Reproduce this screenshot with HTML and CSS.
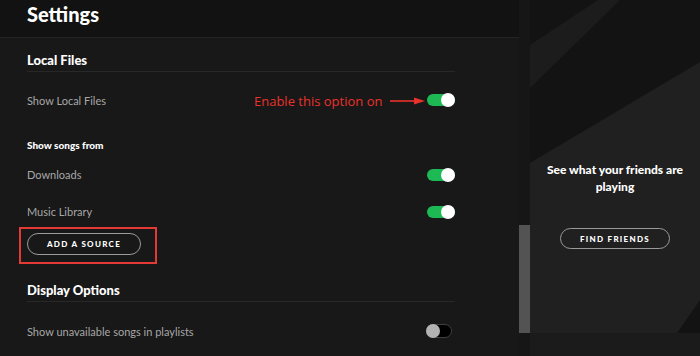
FILE: index.html
```html
<!DOCTYPE html>
<html lang="en">
<head>
  <meta charset="UTF-8" />
  <meta name="viewport" content="width=device-width, initial-scale=1.0"/>
  <title>Settings</title>
  <link rel="stylesheet" href="styles.css">
</head>
<body>

  <main class="settings">
    <header class="settings-header">
      <h1>Settings</h1>
    </header>

    <div class="settings-body">
      <section class="group">
        <h2 class="group-title">Local Files</h2>

        <div class="row row-tall">
          <span class="row-label">Show Local Files</span>
          <span class="toggle on"><span class="knob"></span></span>

          <div class="note">
            <span class="note-text">Enable this option on</span>
            <svg class="note-arrow" width="36" height="8" viewBox="0 0 36 8">
              <path d="M0 4 L26 4" stroke="#e8322b" stroke-width="1.6"/>
              <path d="M24 0.5 L35 4 L24 7.5 Z" fill="#e8322b"/>
            </svg>
          </div>
        </div>

        <h3 class="subtitle">Show songs from</h3>

        <div class="row">
          <span class="row-label">Downloads</span>
          <span class="toggle on"><span class="knob"></span></span>
        </div>

        <div class="row">
          <span class="row-label">Music Library</span>
          <span class="toggle on"><span class="knob"></span></span>
        </div>

        <div class="highlight">
          <button class="btn-outline btn-source">ADD A SOURCE</button>
        </div>
      </section>

      <section class="group">
        <h2 class="group-title group-title-second">Display Options</h2>

        <div class="row row-last">
          <span class="row-label">Show unavailable songs in playlists</span>
          <span class="toggle off"><span class="knob"></span></span>
        </div>
      </section>
    </div>
  </main>

  <div class="scroll-track">
    <div class="scroll-thumb"></div>
  </div>

  <aside class="friends">
    <svg class="friends-bg" width="170" height="356" viewBox="0 0 170 356">
      <rect width="170" height="356" fill="#131313"/>
      <polygon points="0,45 68,0 90,0 0,88" fill="#1c1c1c"/>
      <polygon points="0,163 170,62 170,300 147,333 0,333" fill="#202020"/>
      <polygon points="0,333 170,333 170,356 0,356" fill="#1b1b1b"/>
    </svg>

    <div class="friends-content">
      <p class="friends-text">See what your friends are playing</p>
      <button class="btn-outline btn-friends">FIND FRIENDS</button>
    </div>
  </aside>

</body>
</html>
```

FILE: styles.css
```css
body {
  margin: 0;
  width: 700px;
  height: 356px;
  overflow: hidden;
  display: flex;
  background-color: #181818;
  font-family: 'Lato', 'Noto Sans', sans-serif;
  color: #fff;
}

.settings {
  width: 519px;
  display: flex;
  flex-direction: column;
  overflow: hidden;
  background-color: #181818;
}

.settings-header {
  flex-shrink: 0;
  height: 37px;
  background-color: #121212;
  border-bottom: 1px solid #242424;
  padding: 0 27px;
}

.settings-header h1 {
  margin: 0;
  font-size: 20px;
  font-weight: 900;
  line-height: 29px;
}

.settings-body {
  flex-shrink: 0;
  padding: 0 64px 0 27px;
}

.group-title {
  margin: 0;
  padding: 13px 0 2px;
  font-size: 13px;
  line-height: 18px;
  font-weight: 900;
  border-bottom: 1px solid #282828;
}

.group-title-second {
  padding-top: 17px;
}

.row {
  position: relative;
  height: 37px;
  display: flex;
  align-items: center;
  justify-content: space-between;
}

.row-tall {
  height: 56px;
}

.row-last {
  height: 58px;
}

.row-label {
  font-size: 11px;
  color: #a7a7a7;
}

.subtitle {
  margin: 0;
  padding: 10px 0 4px;
  font-size: 10px;
  line-height: 14px;
  font-weight: 900;
}

.toggle {
  position: relative;
  width: 28px;
  height: 12px;
  border-radius: 7px;
}

.toggle .knob {
  position: absolute;
  top: -1px;
  width: 14px;
  height: 14px;
  border-radius: 50%;
}

.toggle.on {
  background-color: #1db954;
}

.toggle.on .knob {
  right: 0;
  background-color: #fff;
}

.toggle.off {
  width: 24px;
  background-color: #000;
  border: 1px solid #404040;
  margin-right: 3px;
}

.toggle.off .knob {
  left: -1px;
  background-color: #b3b3b3;
}

.note {
  position: absolute;
  left: 227px;
  top: 20px;
  display: flex;
  align-items: center;
  gap: 8px;
}

.note-text {
  font-family: 'Open Sans', sans-serif;
  font-size: 13px;
  color: #e8322b;
}

.highlight {
  box-sizing: border-box;
  width: 138px;
  margin: -3px 0 0 -8px;
  padding: 4px 14px 7px 6px;
  border: 2px solid #e53935;
}

.btn-outline {
  display: block;
  background: transparent;
  color: #fff;
  border: 1px solid #9a9a9a;
  border-radius: 12px;
  font-family: 'Lato', sans-serif;
  font-size: 8px;
  font-weight: 900;
  letter-spacing: 1.3px;
  padding: 0;
  cursor: pointer;
}

.btn-source {
  width: 114px;
  height: 22px;
}

.scroll-track {
  width: 11px;
  background-color: #161616;
}

.scroll-thumb {
  margin-top: 225px;
  height: 108px;
  background-color: #535353;
}

.friends {
  position: relative;
  width: 170px;
  overflow: hidden;
}

.friends-bg {
  position: absolute;
  top: 0;
  left: 0;
}

.friends-content {
  position: relative;
  padding-top: 161px;
  display: flex;
  flex-direction: column;
  align-items: center;
}

.friends-text {
  margin: 0;
  width: 150px;
  text-align: center;
  font-size: 12px;
  line-height: 17px;
  font-weight: 900;
}

.btn-friends {
  margin-top: 33px;
  width: 110px;
  height: 21px;
}
```
